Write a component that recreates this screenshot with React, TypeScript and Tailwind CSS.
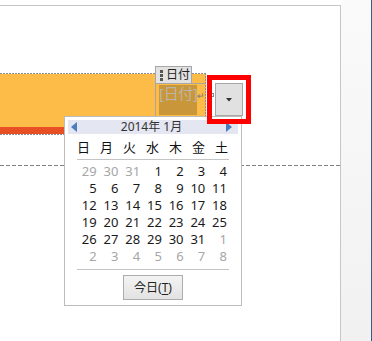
const prev = ["29", "30", "31"];
const weeks: { n: number; muted: boolean }[][] = (() => {
  const cells: { n: number; muted: boolean }[] = [];
  prev.forEach((p) => cells.push({ n: Number(p), muted: true }));
  for (let i = 1; i <= 31; i++) cells.push({ n: i, muted: false });
  let k = 1;
  while (cells.length < 42) cells.push({ n: k++, muted: true });
  const rows = [];
  for (let r = 0; r < 6; r++) rows.push(cells.slice(r * 7, r * 7 + 7));
  return rows;
})();

const DAYS = ["日", "月", "火", "水", "木", "金", "土"];

function Calendar() {
  return (
    <div className="absolute left-[64px] top-[43px] z-10 flex h-[190px] w-[178px] flex-col border border-[#bcbcbc] bg-white">
      <div className="mx-[3px] mt-[3px] flex h-[14px] items-center justify-between bg-[#e4e6f1] px-[3px]">
        <svg width="6" height="10" viewBox="0 0 6 10">
          <path d="M6 0 L0 5 L6 10 Z" fill="#4a7dbd" />
        </svg>
        <span className="text-[12px] leading-[14px] text-[#333]">2014年 1月</span>
        <svg width="6" height="10" viewBox="0 0 6 10" className="mr-[3px]">
          <path d="M0 0 L6 5 L0 10 Z" fill="#4a7dbd" />
        </svg>
      </div>
      <div className="ml-[7px] mt-[5px] grid w-[161px] grid-cols-7">
        {DAYS.map((d) => (
          <div key={d} className="text-center text-[13px] leading-[17px] text-[#111]">
            {d}
          </div>
        ))}
      </div>
      <div className="ml-[12px] mt-[3px] h-px w-[152px] bg-[#c4c4c4]" />
      <div className="ml-[10px] mt-[3px] grid w-[152px] grid-cols-7">
        {weeks.flat().map((c, i) => (
          <div
            key={i}
            className={`text-right text-[13px] leading-[17px] ${c.muted ? "text-[#a6a6a6]" : "text-[#1a1a1a]"}`}
          >
            {c.n}
          </div>
        ))}
      </div>
      <div className="ml-[12px] mt-[4px] h-px w-[152px] bg-[#c4c4c4]" />
      <div className="mt-[5px] flex justify-center">
        <button className="flex h-[25px] w-[60px] items-center justify-center border border-[#acacac] bg-gradient-to-b from-[#f3f3f3] to-[#e2e2e2] text-[12px] text-[#222]">
          今日(<span className="underline underline-offset-2">T</span>)
        </button>
      </div>
    </div>
  );
}

export default function App() {
  return (
    <div
      className="flex h-[341px] w-[372px] overflow-hidden bg-white"
      style={{ fontFamily: '"Noto Sans", "Noto Sans CJK JP", sans-serif' }}
    >
      <div className="w-[341px] shrink-0 bg-white pt-[5px]">
        <div className="h-full border-t border-r border-[#c6c6c6]">
          <div className="relative mt-[67px] flex h-[62px] w-[206px] flex-col">
            <div className="h-px bg-[repeating-linear-gradient(90deg,#8c8c8c_0_2px,transparent_2px_3px)]" />
            <div className="h-[53px] bg-[#fdbb48]" />
            <div className="h-[7px] bg-[#e94f25]" />
            <div className="h-px bg-[repeating-linear-gradient(90deg,#8c8c8c_0_2px,transparent_2px_3px)]" />
            <div className="absolute right-0 top-0 h-[54px] w-px bg-[repeating-linear-gradient(180deg,#8c8c8c_0_2px,transparent_2px_3px)]" />

            {/* content control tag */}
            <div className="absolute left-[155px] top-[-7px] flex h-[18px] w-[37px] items-center gap-[3px] border border-[#a6a6a6] bg-[#e2e2e2] pl-[4px]">
              <div className="flex flex-col gap-[1px]">
                <span className="h-[3px] w-[3px] bg-[#555]" />
                <span className="h-[3px] w-[3px] bg-[#555]" />
                <span className="h-[3px] w-[3px] bg-[#555]" />
              </div>
              <span className="text-[12px] leading-none text-[#222]">日付</span>
            </div>

            {/* content control body */}
            <div className="absolute left-[155px] top-[10px] h-[33px] w-[51px] border-l border-t border-[#a6a6a6]">
              <div className="ml-[3px] mt-[1px] flex h-[30px] w-[38px] items-start bg-[#c9973a]">
                <span className="mt-[1px] whitespace-nowrap text-[15px] leading-[15px] tracking-[-0.3px] text-[#bab5ab]">[日付]</span>
              </div>
              <span className="absolute left-[41px] top-[7px] text-[9px] leading-none text-[#777]">↵</span>
            </div>
            <div className="absolute left-[211px] top-[20px] h-[4px] w-[3px] border border-[#888]" />

            {/* dropdown button */}
            <div className="absolute left-[215px] top-[10px] flex h-[33px] w-[28px] items-center justify-center border border-[#a6a6a6] bg-[#e1e1e1]">
              <svg width="6" height="4" viewBox="0 0 6 4">
                <path d="M0 0 L6 0 L3 3.5 Z" fill="#333" />
              </svg>
            </div>

            {/* highlight */}
            <div className="absolute left-[207px] top-[2px] z-20 h-[49px] w-[44px] border-[5px] border-[#ff0000]" />

            <Calendar />
          </div>
          <div className="mt-[30px] h-px w-[340px] bg-[repeating-linear-gradient(90deg,#808080_0_4px,transparent_4px_6px)]" />
        </div>
      </div>
      <div className="flex-1 bg-gradient-to-b from-[#fafafa] to-[#f1f1f1]" />
      <div className="w-px bg-[#3a5a8c]" />
    </div>
  );
}
